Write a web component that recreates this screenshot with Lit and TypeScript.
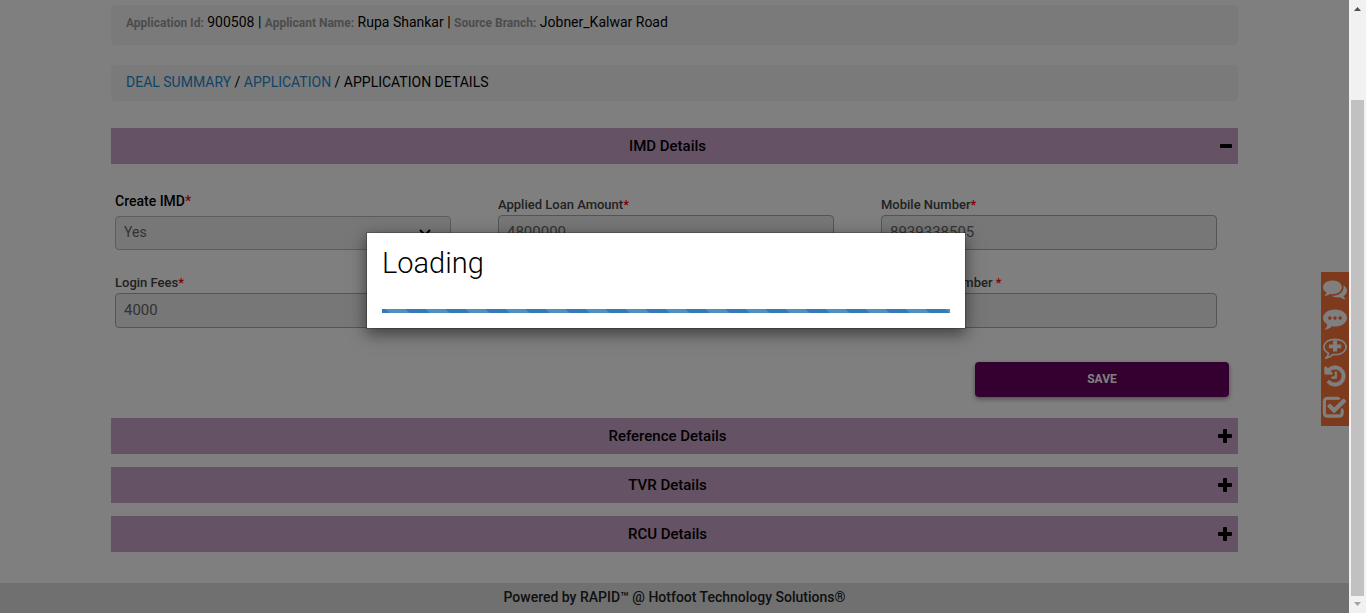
import { LitElement, html, svg, css } from "lit";
import { customElement, property } from "lit/decorators.js";

const ICONS = [
  {
    label: "Conversations",
    shape: svg`<path d="M1408 768q0 139-94 257t-256.5 186.5-353.5 68.5q-86 0-176-16-124 88-278 128-36 9-86 16h-3q-11 0-20.5-8t-11.5-21q-1-3-1-6.5t.5-6.5 2-6l2.5-5 3.5-5.5 4-5 4.5-5 4-4.5q5-6 23-25t26-29.5 22.5-29 25-38.5 20.5-44q-124-72-195-177t-71-224q0-139 94-257t256.5-186.5 353.5-68.5 353.5 68.5 256.5 186.5 94 257zm384 256q0 120-71 224.5t-195 176.5q10 24 20.5 44t25 38.5 22.5 29 26 29.5 23 25q1 1 4 4.5t4.5 5 4 5 3.5 5.5l2.5 5 2 6 .5 6.5-1 6.5q-3 14-13 22t-22 7q-50-7-86-16-154-40-278-128-90 16-176 16-271 0-472-132 58 4 88 4 161 0 309-45t264-129q125-92 192-212t67-254q0-77-23-152 129 71 204 178t75 230z"/>`,
  },
  {
    label: "Comments",
    shape: svg`<path d="M640 896q0-53-37.5-90.5t-90.5-37.5-90.5 37.5-37.5 90.5 37.5 90.5 90.5 37.5 90.5-37.5 37.5-90.5zm384 0q0-53-37.5-90.5t-90.5-37.5-90.5 37.5-37.5 90.5 37.5 90.5 90.5 37.5 90.5-37.5 37.5-90.5zm384 0q0-53-37.5-90.5t-90.5-37.5-90.5 37.5-37.5 90.5 37.5 90.5 90.5 37.5 90.5-37.5 37.5-90.5zm384 0q0 174-120 321.5t-326 233-450 85.5q-110 0-211-18-173 173-435 229-52 10-86 13-12 1-22-6t-13-18q-4-15 20-37 5-5 23.5-21.5t25.5-23.5 23.5-25.5 24-31.5 20.5-37 20-48 14.5-57.5 12.5-72.5q-146-90-229.5-216.5t-83.5-269.5q0-174 120-321.5t326-233 450-85.5 450 85.5 326 233 120 321.5z"/>`,
  },
  {
    label: "Add comment",
    shape: svg`<path d="M896 384q-204 0-381.5 69.5t-282 187.5-104.5 255q0 112 71.5 213.5t201.5 175.5l87 50-27 96q-24 91-70 172 152-63 275-171l43-38 57 6q69 8 130 8 204 0 381.5-69.5t282-187.5 104.5-255-104.5-255-282-187.5-381.5-69.5zm896 512q0 174-120 321.5t-326 233-450 85.5q-70 0-145-8-198 175-460 242-49 14-114 22h-5q-15 0-27-10.5t-16-27.5v-1q-3-4-.5-12t2-10 4.5-9.5l6-9 7-8.5 8-9q7-8 31-34.5t34.5-38 31-39.5 32.5-51 27-59 26-76q-157-89-247.5-220t-90.5-281q0-174 120-321.5t326-233 450-85.5 450 85.5 326 233 120 321.5z"/><path d="M750 400h300v310h310v270h-310v250h-300v-250h-310v-270h310z"/>`,
  },
  {
    label: "History",
    shape: svg`<path d="M1664 896q0 156-61 298t-164 245-245 164-298 61q-172 0-327-72.5t-264-204.5q-7-10-6.5-22.5t8.5-20.5l137-138q10-9 25-9 16 2 23 12 73 95 179 147t225 52q104 0 198.5-40.5t163.5-109.5 109.5-163.5 40.5-198.5-40.5-198.5-109.5-163.5-163.5-109.5-198.5-40.5q-98 0-188 35.5t-160 101.5l137 138q31 30 14 69-17 40-59 40h-448q-26 0-45-19t-19-45v-448q0-42 40-59 39-17 69 14l130 129q107-101 244.5-156.5t284.5-55.5q156 0 298 61t245 164 164 245 61 298zm-640-288v448q0 14-9 23t-23 9h-320q-14 0-23-9t-9-23v-64q0-14 9-23t23-9h224v-352q0-14 9-23t23-9h64q14 0 23 9t9 23z" stroke="currentColor" stroke-width="50"/>`,
  },
  {
    label: "Tasks",
    large: true,
    shape: svg`<path d="M1472 930v318q0 119-84.5 203.5t-203.5 84.5h-832q-119 0-203.5-84.5t-84.5-203.5v-832q0-119 84.5-203.5t203.5-84.5h832q63 0 117 25 15 7 18 23 3 17-9 29l-49 49q-10 10-23 10-3 0-9-2-23-6-45-6h-832q-66 0-113 47t-47 113v832q0 66 47 113t113 47h832q66 0 113-47t47-113v-254q0-13 9-22l64-64q10-10 23-10 6 0 12 3 20 8 20 29zm231-489l-814 814q-24 24-57 24t-57-24l-430-430q-24-24-24-57t24-57l110-110q24-24 57-24t57 24l263 263 647-647q24-24 57-24t57 24l110 110q24 24 24 57t-24 57z"/><path d="M352 163h832M352 1502h832q254 0 254-254V1000M99 416q0-253 253-253M99 416v832q0 254 253 254" fill="none" stroke="currentColor" stroke-width="230"/>`,
  },
];

@customElement("section-header")
class SectionHeader extends LitElement {
  @property() heading = "";
  @property({ type: Boolean }) open = false;

  static styles = css`
    :host {
      display: block;
    }
    h2 {
      margin: 0;
    }
    .bar {
      display: flex;
      align-items: center;
      width: 100%;
      height: 36px;
      padding: 0 6px;
      border: 0;
      background: #cba5cb;
      color: #000;
      font: 500 15px/20px Roboto, sans-serif;
    }
    .title {
      flex: 1;
      text-align: center;
    }
    .sign {
      width: 14px;
      height: 14px;
    }
  `;

  render() {
    return html`<h2>
      <button class="bar" type="button" aria-expanded=${this.open ? "true" : "false"}>
        <span class="title">${this.heading}</span>
        <svg class="sign" viewBox="0 0 14 14" aria-hidden="true">
          ${this.open
            ? svg`<rect x="2" y="5" width="12" height="4" rx="1"/>`
            : svg`<path d="M5 1q0-1 1-1h2q1 0 1 1v4h4q1 0 1 1v2q0 1-1 1H9v4q0 1-1 1H6q-1 0-1-1V9H1Q0 9 0 8V6q0-1 1-1h4z"/>`}
        </svg>
      </button>
    </h2>`;
  }
}

@customElement("app-root")
class AppRoot extends LitElement {
  static styles = css`
    :host {
      display: flex;
      min-height: 100vh;
      font: 14px/20px Roboto, sans-serif;
      color: #000;
      background: #fff;
    }
    * {
      box-sizing: border-box;
    }
    .page {
      position: relative;
      flex: 1;
      display: flex;
      flex-direction: column;
    }
    main {
      flex: 1;
      padding: 5px 111px 30px;
    }
    .strip {
      background: #f5f5f5;
      border-radius: 4px;
      padding: 7px 15px 9px;
    }
    .summary {
      padding-bottom: 12px;
      margin-bottom: 20px;
    }
    .key {
      font-size: 12px;
      font-weight: 700;
      color: #999;
    }
    .crumbs {
      margin-bottom: 27px;
    }
    .crumbs a {
      color: #1e88d0;
      text-decoration: none;
    }
    .fields {
      display: grid;
      grid-template-columns: repeat(3, 1fr);
      gap: 23px 47px;
      align-items: end;
      padding: 27px 21px 0 4px;
    }
    .field {
      display: flex;
      flex-direction: column;
    }
    .field.third {
      grid-column: 3;
    }
    label {
      font-size: 13px;
      font-weight: 500;
      color: #444;
    }
    .choice label {
      font-size: 14px;
      color: #000;
      margin-bottom: 5px;
    }
    .star {
      color: #f00;
    }
    input,
    select {
      width: 100%;
      height: 35px;
      padding: 0 8px 2px;
      border: 1px solid #aaa;
      border-radius: 4px;
      background: #eee;
      color: #666;
      opacity: 1;
      font: 15px/20px Roboto, sans-serif;
      appearance: none;
    }
    select {
      height: 34px;
      font-size: 14px;
      border-color: #bbb;
    }
    .drop {
      display: grid;
      align-items: center;
    }
    .drop > * {
      grid-area: 1 / 1;
    }
    .chevron {
      justify-self: end;
      width: 12px;
      height: 8px;
      margin-right: 20px;
    }
    .actions {
      display: flex;
      justify-content: flex-end;
      padding: 34px 9px 21px;
    }
    .save {
      width: 254px;
      height: 35px;
      padding: 0 8px 2px;
      border: 0;
      border-radius: 4px;
      background: #66005e;
      color: #fff;
      font: 700 12px/20px Roboto, sans-serif;
      box-shadow: 0 2px 5px rgba(0, 0, 0, 0.4);
    }
    .sections {
      display: grid;
      gap: 13px;
    }
    footer {
      height: 30px;
      padding: 4px 0;
      background: #e0e0e0;
      color: #222;
      font-weight: 500;
      text-align: center;
    }
    .tools {
      position: absolute;
      top: 272px;
      right: 0;
      width: 28px;
      height: 154px;
      padding-top: 5px;
      background: #fb7439;
      display: flex;
      flex-direction: column;
      align-items: center;
      gap: 5px;
    }
    .tool {
      display: block;
      padding: 0;
      border: 0;
      background: none;
      color: #fff;
      line-height: 0;
    }
    .tool svg {
      width: 24px;
      height: 24px;
      fill: currentColor;
    }
    .tool.large svg {
      width: 24px;
      height: 30px;
      overflow: visible;
    }
    .shade {
      position: absolute;
      inset: 0;
      padding-right: 17px;
      background: rgba(0, 0, 0, 0.5);
    }
    .dialog {
      width: 600px;
      margin: 232px auto 0;
      padding: 15px;
      border: 1px solid rgba(0, 0, 0, 0.2);
      background: #fff;
      background-clip: padding-box;
      box-shadow: 0 5px 15px rgba(0, 0, 0, 0.5);
    }
    .dialog h1 {
      margin: 0 0 31px;
      font-size: 29px;
      font-weight: 300;
      line-height: 30px;
    }
    .progress {
      height: 4px;
      background: 4px 0 / 40px 40px
        linear-gradient(
          45deg,
          rgba(255, 255, 255, 0.15) 25%,
          transparent 25%,
          transparent 50%,
          rgba(255, 255, 255, 0.15) 50%,
          rgba(255, 255, 255, 0.15) 75%,
          transparent 75%
        )
        #337ab7;
    }
    .scroll {
      width: 17px;
      background: #f1f1f1;
      display: flex;
      flex-direction: column;
      align-items: center;
    }
    .scroll svg {
      width: 17px;
      height: 17px;
    }
    .thumb {
      flex: 1;
      width: 13px;
      margin-top: 83px;
      background: #c1c1c1;
    }
  `;

  private field(id: string, label: unknown, value: string, extra = "") {
    return html`<div class="field ${extra}">
      <label for=${id}>${label}<span class="star">*</span></label>
      <input id=${id} type="text" .value=${value} readonly />
    </div>`;
  }

  render() {
    return html`
      <div class="page">
        <main>
          <div class="strip summary">
            <span class="key">Application Id:</span> 900508 |
            <span class="key">Applicant Name:</span> Rupa Shankar |
            <span class="key">Source Branch:</span> Jobner_Kalwar Road
          </div>
          <nav class="strip crumbs" aria-label="Breadcrumb">
            <a href="#deal">DEAL SUMMARY</a> / <a href="#application">APPLICATION</a> / APPLICATION DETAILS
          </nav>
          <section-header heading="IMD Details" open></section-header>
          <form>
            <div class="fields">
              <div class="field choice">
                <label for="create">Create IMD<span class="star">*</span></label>
                <div class="drop">
                  <select id="create" disabled>
                    <option>Yes</option>
                  </select>
                  <svg class="chevron" viewBox="0 0 12 8" aria-hidden="true">
                    <path d="M1 1l5 5 5-5" fill="none" stroke="#000" stroke-width="2" />
                  </svg>
                </div>
              </div>
              ${this.field("amount", "Applied Loan Amount", "4800000")}
              ${this.field("mobile", "Mobile Number", "8939338505")}
              ${this.field("fees", "Login Fees", "4000")}
              ${this.field("instrument", "Instrument number ", "", "third")}
            </div>
            <div class="actions"><button class="save" type="button">SAVE</button></div>
          </form>
          <div class="sections">
            <section-header heading="Reference Details"></section-header>
            <section-header heading="TVR Details"></section-header>
            <section-header heading="RCU Details"></section-header>
          </div>
        </main>
        <footer>Powered by RAPID™ @ Hotfoot Technology Solutions®</footer>
        <aside class="tools">
          ${ICONS.map(
            (icon) => html`<button class="tool ${icon.large ? "large" : ""}" type="button" aria-label=${icon.label}>
              <svg viewBox="0 0 1792 1792" aria-hidden="true">${icon.shape}</svg>
            </button>`
          )}
        </aside>
        <div class="shade">
          <div class="dialog" role="dialog" aria-labelledby="loading">
            <h1 id="loading">Loading</h1>
            <div class="progress" role="progressbar" aria-label="Loading"></div>
          </div>
        </div>
      </div>
      <div class="scroll" aria-hidden="true">
        <svg viewBox="0 0 17 17"><path d="M5 11h7L8.500 7z" fill="#505050" /></svg>
        <div class="thumb"></div>
        <svg viewBox="0 0 17 17"><path d="M5 6h7L8.500 10z" fill="#a3a3a3" /></svg>
      </div>
    `;
  }
}
